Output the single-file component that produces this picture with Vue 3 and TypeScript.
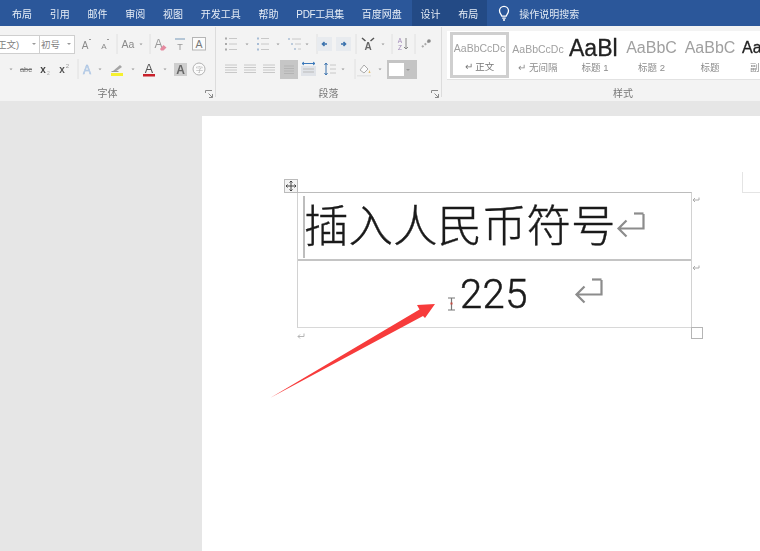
<template>
  <div class="word">
    <!-- 标题栏选项卡 -->
    <div class="tabs">
      <span v-for="t in tabs" :key="t" class="tab">{{ t }}</span>
      <div class="ctx-tabs">
        <span class="tab">设计</span>
        <span class="tab">布局</span>
      </div>
      <svg class="bulb" width="14" height="16" viewBox="0 0 14 16" fill="none" stroke="#fff" stroke-width="1.3">
        <path d="M4.8 11.2C4.6 9.6 2.5 8.600 2.500 5.800a4.500 4.500 0 0 1 9 0c0 2.800-2.100 3.800-2.300 5.400z" />
        <path d="M5.200 13.200h3.600M6 15h2" />
      </svg>
      <span class="search">操作说明搜索</span>
    </div>

    <!-- 功能区 -->
    <div class="ribbon">
      <section class="group font-group">
        <div class="tool-row">
          <div class="combo first"><span class="combo-text clip">正文)</span><i class="caret"></i></div>
          <div class="combo second"><span class="combo-text">初号</span><i class="caret"></i></div>
          <template v-for="(c, i) in fontTop" :key="i">
            <span class="cell" :style="{ width: c[1] + 'px' }"><svg v-if="c[0]" width="18" height="18" viewBox="0 0 18 18" v-html="icons[c[0]]"></svg></span>
          </template>
        </div>
        <div class="tool-row">
          <template v-for="(c, i) in fontBottom" :key="i">
            <span class="cell" :style="{ width: c[1] + 'px' }"><svg v-if="c[0]" width="18" height="18" viewBox="0 0 18 18" v-html="icons[c[0]]"></svg></span>
          </template>
        </div>
        <div class="group-foot">
          字体
          <svg class="launcher" width="8" height="8" viewBox="0 0 8 8" fill="none" stroke="#8a8a8a"><path d="M.5 3V.5H7M7.500 7.500L3.500 3.500M7.500 4v3.500H4" /></svg>
        </div>
      </section>

      <section class="group para-group">
        <div class="tool-row">
          <template v-for="(c, i) in paraTop" :key="i">
            <span class="cell" :style="{ width: c[1] + 'px' }"><svg v-if="c[0]" width="18" height="18" viewBox="0 0 18 18" v-html="icons[c[0]]"></svg></span>
          </template>
        </div>
        <div class="tool-row">
          <template v-for="(c, i) in paraBottom" :key="i">
            <span class="cell" :style="{ width: c[1] + 'px' }" :class="{ pressed: c[0] === 'pressed' }">
              <svg v-if="c[0] && c[0] !== 'table'" width="18" height="18" viewBox="0 0 18 18" v-html="icons[c[0]]"></svg>
              <span v-if="c[0] === 'table'" class="border-btn"><b></b><i class="caret"></i></span>
            </span>
          </template>
        </div>
        <div class="group-foot">
          段落
          <svg class="launcher" width="8" height="8" viewBox="0 0 8 8" fill="none" stroke="#8a8a8a"><path d="M.5 3V.5H7M7.500 7.500L3.500 3.500M7.500 4v3.500H4" /></svg>
        </div>
      </section>

      <section class="group style-group">
        <div class="gallery">
          <div v-for="s in styles" :key="s.cls" class="style-item" :class="s.cls">
            <div class="sample">{{ s.sample }}</div>
            <div class="style-name">{{ s.label }}</div>
          </div>
        </div>
        <div class="group-foot">样式</div>
      </section>
    </div>

    <!-- 文档区 -->
    <div class="workspace">
      <div class="page">
        <i class="crop-mark"></i>
        <div class="table-wrap">
          <span class="move-handle">
            <svg width="12" height="12" viewBox="0 0 12 12" fill="none" stroke="#444"><path d="M6 1v10M1 6h10M4.500 2.500L6 1l1.500 1.500M4.500 9.500L6 11l1.500-1.500M2.500 4.500L1 6l1.500 1.500M9.500 4.500L11 6 9.500 7.500" /></svg>
          </span>
          <div class="doc-row title-row">
            <i class="sel-bar"></i>
            <span class="title-text">插入人民币符号</span>
            <svg class="mark big" width="30" height="26" viewBox="0 0 30 26" fill="none" stroke="#8c8c8c" stroke-width="2.200"><path d="M27.500 2h0v14.500H2.500M10.500 8.500L2.500 16.500l8 8" /><path d="M18 1.500h9.500" /></svg>
            <svg class="cell-end" width="8" height="6" viewBox="0 0 8 6" fill="none" stroke="#aaa"><path d="M7 .5v2.500H1M3 1L1 3l2 2" /></svg>
          </div>
          <div class="doc-row num-row">
            <svg class="ibeam" width="9" height="14" viewBox="0 0 9 14" fill="none" stroke="#777" stroke-width="1.200"><path d="M1 1h7M1 13h7M4.500 1v12" /><path d="M3.500 6.500h2" stroke="#c8493f" stroke-width="2" /></svg>
            <span class="num-text">225</span>
            <svg class="mark" width="30" height="26" viewBox="0 0 30 26" fill="none" stroke="#8c8c8c" stroke-width="2.200"><path d="M27.500 2h0v14.500H2.500M10.500 8.500L2.500 16.500l8 8" /><path d="M18 1.500h9.500" /></svg>
            <svg class="cell-end" width="8" height="6" viewBox="0 0 8 6" fill="none" stroke="#aaa"><path d="M7 .5v2.500H1M3 1L1 3l2 2" /></svg>
          </div>
          <i class="resize-handle"></i>
          <svg class="para-end" width="8" height="7" viewBox="0 0 8 7" fill="none" stroke="#b5b5b5"><path d="M7 .5v3H1M3 1.500L1 3.500l2 2" /></svg>
        </div>
        <svg class="arrow" width="170" height="116" viewBox="0 0 170 116">
          <path d="M0 114L149.500 25.500 147 21 165 20 155 34 153 32z" fill="#f73b3b" />
        </svg>
      </div>
    </div>
  </div>
</template>

<script setup lang="ts">
type Cell = [string, number];

const tabs = ["布局", "引用", "邮件", "审阅", "视图", "开发工具", "帮助", "PDF工具集", "百度网盘"];

const txt = (x: number, y: number, size: number, s: string, fill: string, extra = "") =>
  `<text x="${x}" y="${y}" font-size="${size}" font-family="Liberation Sans, sans-serif" text-anchor="middle" fill="${fill}" ${extra}>${s}</text>`;

const lines = (xs: number, xe: number, ys: number[], color = "#c8c8c8") =>
  ys.map((y) => `<path d="M${xs} ${y}H${xe}" stroke="${color}" stroke-width="1" fill="none"/>`).join("");

const bullets = (color: string) =>
  [3.500, 9, 14.500].map((y) => `<rect x="3" y="${y - 1}" width="2" height="2" fill="${color}"/>`).join("") + lines(7, 15, [3.500, 9, 14.500]);

const icons: Record<string, string> = {
  caret: `<path d="M7.500 8.500h3L9 10.200z" fill="#999"/>`,
  sep: `<path d="M9 -1V19" stroke="#e0e0e0"/>`,
  grow: txt(8, 14, 10, "A", "#8a8a8a") + `<path d="M12 5l1-1 1 1" stroke="#999" fill="none"/>`,
  shrink: txt(8, 14, 8, "A", "#8a8a8a") + `<path d="M11 4l1 1 1-1" stroke="#999" fill="none"/>`,
  aa: txt(9, 13, 10.500, "Aa", "#8a8a8a"),
  clear: txt(7.500, 13, 12, "A", "#9a9a9a") + `<path d="M9 14l3.500-4 3 2.500-3 3h-2.500z" fill="#e58aa0"/>`,
  phonetic: `<path d="M4 4h10" stroke="#b4c6d6" stroke-width="2"/>` + txt(9, 15, 9, "T", "#999"),
  boxA: `<rect x="2.500" y="2.500" width="13" height="12.500" fill="#fbfbfb" stroke="#b5b5b5"/>` + txt(9, 13, 10.500, "A", "#777"),
  strike: txt(9, 12, 7.500, "abc", "#777") + `<path d="M3 9.500h12" stroke="#777"/>`,
  sub: txt(7, 13, 10, "x", "#444", 'font-weight="bold"') + txt(12.500, 15, 5, "2", "#aaa"),
  sup: txt(7, 13, 10, "x", "#555", 'font-weight="bold"') + txt(12.500, 8, 6, "2", "#999"),
  effect: txt(9, 13.500, 12, "A", "#c5d7ee", 'stroke="#a6c0e0" stroke-width="0.500"'),
  highlight: `<path d="M5 11l7-6 2 2-7 5z" fill="#a5a5a5"/><path d="M3.500 11.500h7" stroke="#999"/><rect x="3" y="13" width="12" height="3" fill="#f5f02e"/>`,
  redA: txt(9, 13, 12.500, "A", "#555") + `<rect x="3" y="14" width="12" height="2.500" fill="#c8202a"/>`,
  shadeA: `<rect x="3" y="3" width="13" height="13" fill="#cecece"/>` + txt(9.500, 14, 12, "A", "#666", 'font-weight="bold"'),
  circleA: `<circle cx="9" cy="9" r="6" fill="#fbfbfb" stroke="#b0b0b0"/>` + txt(9, 12, 7, "字", "#aaa"),
  list: bullets("#aaa"),
  numList: bullets("#a8bdd6"),
  multi: `<rect x="2" y="3" width="2" height="2" fill="#bccbdc"/><rect x="5" y="8" width="2" height="2" fill="#bccbdc"/><rect x="8" y="13" width="2" height="2" fill="#bccbdc"/>` + lines(6, 15, [4]) + lines(9, 15, [9]) + lines(12, 15, [14]),
  outdent: `<rect x="1" y="2" width="15" height="14" fill="#e8ebef"/><path d="M11 9H6.500M8.500 7L6.500 9l2 2" stroke="#3b72ad" stroke-width="1.600" fill="none"/>`,
  indent: `<rect x="1" y="2" width="15" height="14" fill="#e8ebef"/><path d="M6 9h4.500M8.500 7l2 2-2 2" stroke="#3b72ad" stroke-width="1.600" fill="none"/>`,
  xmark: txt(9, 15, 10, "A", "#666", 'font-weight="bold"') + `<path d="M3 3l3.500 3M15 3l-3.500 3" stroke="#555" stroke-width="1.500"/>`,
  sort: txt(6, 8, 6.500, "A", "#a088b8") + txt(6, 15, 6.500, "Z", "#a088b8") + `<path d="M12 3v11M10 12l2 2 2-2" stroke="#888" fill="none"/>`,
  pilcrow: `<path d="M5 12l7-6" stroke="#aaa" stroke-dasharray="2 1.500" stroke-width="2"/><circle cx="12" cy="6" r="1.800" fill="#888"/>`,
  left: lines(3, 15, [5, 7.500, 10, 12.500]),
  center: lines(3, 15, [5, 7.500, 10, 12.500]),
  right: lines(3, 15, [5, 7.500, 10, 12.500]),
  pressed: lines(4, 14, [6, 8.500, 11, 13.500], "#b4b4b4"),
  dist: `<rect x="2" y="6" width="15" height="10" fill="#e0e3e8"/><path d="M3 3.500h13M5 2L3 3.500 5 5M14 2l2 1.500L14 5" stroke="#3a78ba" fill="none"/>` + lines(4, 15, [9, 12], "#bbb"),
  spacing: `<path d="M5 3v12M3.500 5L5 3l1.500 2M3.500 13L5 15l1.500-2" stroke="#3b72ad" fill="none"/>` + lines(9, 15, [5, 9, 13]),
  fill: `<path d="M5 10l4-5 4 4-4 4z" fill="#fbfbfb" stroke="#aaa"/><path d="M14.500 10l1 3h-2z" fill="#e6c070"/><rect x="2" y="15" width="14" height="1.500" fill="#e4e4e4"/>`,
};

const fontTop: Cell[] = [["", 1], ["grow", 19], ["shrink", 20], ["", 1], ["sep", 1], ["", 1], ["aa", 19], ["caret", 7], ["", 5], ["sep", 1], ["clear", 20], ["phonetic", 19], ["boxA", 19]];
const fontBottom: Cell[] = [["", 8], ["caret", 6], ["", 3], ["strike", 18], ["sub", 20], ["sup", 18], ["", 4], ["sep", 1], ["effect", 18], ["caret", 8], ["", 2], ["highlight", 22], ["", 2], ["caret", 6], ["redA", 26], ["caret", 6], ["", 3], ["shadeA", 18], ["circleA", 20]];
const paraTop: Cell[] = [["", 6], ["list", 18], ["", 4], ["caret", 6], ["", 4], ["numList", 18], ["", 3], ["caret", 6], ["", 5], ["multi", 18], ["caret", 6], ["", 6], ["sep", 1], ["outdent", 16], ["", 3], ["indent", 16], ["", 3], ["sep", 1], ["xmark", 24], ["caret", 6], ["", 5], ["sep", 1], ["sort", 22], ["sep", 1], ["", 3], ["pilcrow", 16]];
const paraBottom: Cell[] = [["", 6], ["left", 18], ["", 1], ["center", 18], ["", 1], ["right", 18], ["", 2], ["pressed", 18], ["dist", 19], ["", 3], ["spacing", 20], ["caret", 6], ["", 8], ["sep", 1], ["fill", 18], ["", 4], ["caret", 6], ["", 4], ["table", 30]];

const styles = [
  { sample: "AaBbCcDc", label: "↵ 正文", cls: "normal" },
  { sample: "AaBbCcDc", label: "↵ 无间隔", cls: "nospace" },
  { sample: "AaBl", label: "标题 1", cls: "h1" },
  { sample: "AaBbC", label: "标题 2", cls: "h2" },
  { sample: "AaBbC", label: "标题", cls: "h3" },
  { sample: "Aa", label: "副", cls: "sub" },
];
</script>

<style>
body {
  margin: 0;
  overflow: hidden;
}
</style>

<style scoped>
.word {
  width: 760px;
  height: 551px;
  overflow: hidden;
  display: flex;
  flex-direction: column;
  background: #e6e6e6;
  font-family: "Liberation Sans", "Noto Sans CJK SC", sans-serif;
}

.tabs {
  height: 26px;
  flex: none;
  display: flex;
  align-items: center;
  padding-left: 3px;
  background: #2b579a;
  border-bottom: 1px solid #f3f3f3;
}

.tab {
  padding: 0 8.900px;
  font-size: 10px;
  color: #e6edf6;
  white-space: nowrap;
  filter: blur(0.3px);
}

.tab:nth-child(8) {
  letter-spacing: -0.400px;
}

.ctx-tabs {
  display: flex;
  align-items: center;
  align-self: stretch;
  margin-left: 1px;
  background: #234a85;
}

.bulb {
  margin-left: 10px;
}

.search {
  margin-left: 8px;
  font-size: 10px;
  color: #dfe8f3;
  filter: blur(0.3px);
}

.ribbon {
  height: 74px;
  flex: none;
  display: flex;
  background: #f3f3f3;
}

.group {
  flex: none;
  display: flex;
  flex-direction: column;
  height: 70px;
  border-right: 1px solid #dcdcdc;
  box-sizing: border-box;
}

.font-group {
  width: 216px;
}

.para-group {
  width: 226px;
}

.style-group {
  flex: 1;
  border-right: none;
  padding-left: 5px;
}

.tool-row {
  display: flex;
  align-items: center;
  height: 18px;
  margin-top: 8px;
  filter: blur(0.5px);
}

.tool-row + .tool-row {
  margin-top: 7px;
}

.cell {
  flex: none;
  height: 18px;
  display: flex;
  justify-content: center;
  box-sizing: border-box;
  overflow: visible;
}

.cell svg {
  flex: none;
  overflow: visible;
}

.pressed {
  background: #c6c6c6;
  height: 19px;
}

.combo {
  flex: none;
  height: 19px;
  box-sizing: border-box;
  display: flex;
  align-items: center;
  background: #fff;
  border: 1px solid #cfcfcf;
  font-size: 9.500px;
  color: #808080;
  overflow: hidden;
}

.combo.first {
  width: 40px;
  border-left: none;
}

.combo.second {
  width: 35px;
  border-left: none;
  padding-left: 1px;
}

.combo-text {
  flex: 1;
  white-space: nowrap;
}

.clip {
  margin-left: -3px;
}

.caret {
  flex: none;
  width: 0;
  height: 0;
  margin-right: 3px;
  border-left: 2px solid transparent;
  border-right: 2px solid transparent;
  border-top: 2px solid #999;
}

.border-btn {
  width: 30px;
  height: 19px;
  display: flex;
  align-items: center;
  justify-content: space-between;
  padding: 0 4px 0 2px;
  box-sizing: border-box;
  background: #c4c4c4;
}

.border-btn b {
  width: 15px;
  height: 13px;
  background: #fff;
}

.group-foot {
  position: relative;
  margin-top: auto;
  height: 13px;
  line-height: 13px;
  text-align: center;
  font-size: 10px;
  color: #777;
  margin-bottom: -3px;
  filter: blur(0.3px);
}

.launcher {
  position: absolute;
  right: 2px;
  top: 3px;
}

.gallery {
  height: 48px;
  margin-top: 4px;
  display: flex;
  align-items: flex-start;
  background: #fff;
  border-bottom: 1px solid #e2e2e2;
  overflow: hidden;
}

.style-item {
  flex: none;
  width: 58px;
  height: 46px;
  box-sizing: border-box;
  text-align: center;
  color: #a0a0a0;
  overflow: hidden;
}

.sample {
  height: 30px;
  line-height: 34px;
  font-size: 10.500px;
  white-space: nowrap;
  overflow: hidden;
  filter: blur(0.3px);
}

.style-name {
  font-size: 9.500px;
  line-height: 14px;
  color: #8c8c8c;
  white-space: nowrap;
  filter: blur(0.4px);
}

.normal {
  width: 59px;
  margin: 1px 0 0 3px;
  border: 3px solid #cfcfcf;
}

.normal .sample {
  height: 25px;
  line-height: 27px;
}

.normal .style-name {
  color: #777;
}

.nospace {
  margin-top: 4px;
}

.nospace .sample {
  height: 26px;
  line-height: 28px;
}

.h1 {
  width: 54px;
  margin-left: 1px;
}

.h1 .sample {
  font-size: 23px;
  color: #222;
  text-align: left;
  padding-left: 1px;
  -webkit-text-stroke: 0.300px #222;
}

.h2 .sample,
.h3 .sample {
  font-size: 16px;
}

.h2 {
  width: 59px;
}

.sub {
  margin-left: 2px;
}

.sub .sample {
  font-size: 16px;
  color: #222;
  text-align: left;
  padding-left: 1px;
  -webkit-text-stroke: 0.300px #222;
}

.sub .style-name {
  text-align: left;
  padding-left: 9px;
}

.workspace {
  flex: 1;
  min-height: 0;
  padding: 15px 0 0 202px;
}

.page {
  position: relative;
  height: 100%;
  background: #fff;
  padding: 76px 0 0 95px;
  box-sizing: border-box;
}

.crop-mark {
  position: absolute;
  left: 540px;
  top: 56px;
  width: 18px;
  height: 20px;
  border-left: 1px solid #e4e4e4;
  border-bottom: 1px solid #e4e4e4;
}

.table-wrap {
  position: relative;
  width: 395px;
  height: 136px;
  box-sizing: border-box;
  border-top: 1px solid #bcbcbc;
  border-left: 1px solid #d2d2d2;
  border-right: 1px solid #d2d2d2;
  border-bottom: 1px solid #d8d8d8;
}

.doc-row {
  position: relative;
  height: 67px;
  box-sizing: border-box;
}

.title-row {
  display: flex;
  align-items: center;
  padding-left: 7px;
  border-bottom: 2px solid #c4c4c4;
  height: 68px;
}

.title-text {
  font-size: 44.500px;
  line-height: 1;
  color: #1a1a1a;
  white-space: nowrap;
  font-weight: 300;
  -webkit-text-stroke: 0.350px #1a1a1a;
  margin-top: 2px;
  margin-left: -1px;
  filter: blur(0.4px);
}

.mark {
  flex: none;
  margin-top: -3px;
}

.sel-bar {
  position: absolute;
  left: 5px;
  top: 3px;
  width: 2px;
  height: 62px;
  background: #bdbdbd;
}

.cell-end {
  position: absolute;
  right: -9px;
  top: 4px;
}

.num-row {
  display: flex;
  align-items: center;
  padding-left: 149px;
}

.ibeam {
  flex: none;
  margin-top: 19px;
}

.num-text {
  margin-left: 4px;
  font-family: Roboto, "Liberation Sans", sans-serif;
  font-weight: 300;
  font-size: 40px;
  letter-spacing: 0.400px;
  -webkit-text-stroke: 0.500px #1a1a1a;
  line-height: 1;
  color: #1a1a1a;
  margin-top: 0;
  filter: blur(0.4px);
}

.num-row .mark {
  margin: -7px 0 0 46px;
}

.move-handle {
  position: absolute;
  left: -14px;
  top: -14px;
  width: 12px;
  height: 12px;
  background: #f4f4f4;
  border: 0.500px solid #bbb;
  display: flex;
}

.resize-handle {
  position: absolute;
  right: -12px;
  bottom: -12px;
  width: 10px;
  height: 10px;
  border: 1px solid #b5b5b5;
  background: #fff;
}

.para-end {
  position: absolute;
  left: -1px;
  top: 140px;
}

.arrow {
  position: absolute;
  left: 68px;
  top: 168px;
  overflow: visible;
}
</style>
